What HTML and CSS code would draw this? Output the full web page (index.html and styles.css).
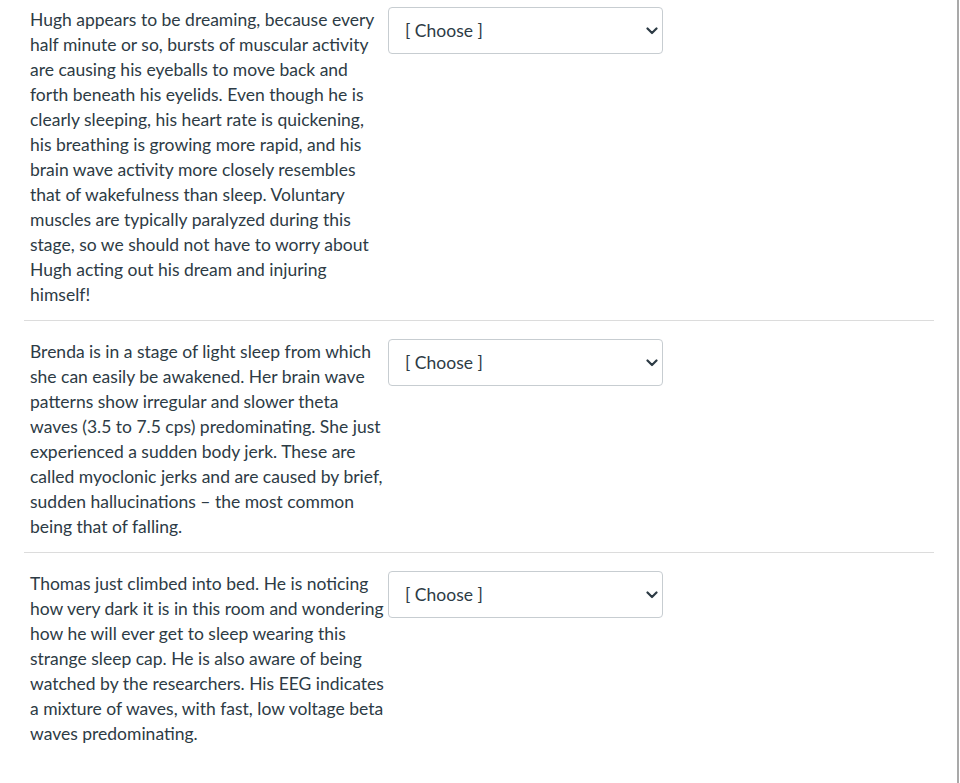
FILE: index.html
```html
<!DOCTYPE html>
<html>
<head>
<meta charset="utf-8">
<link rel="stylesheet" href="styles.css">
</head>
<body>
<div class="page">
  <div class="answers">
    <div class="row first">
      <div class="match-left">Hugh appears to be dreaming, because every half minute or so, bursts of muscular activity are causing his eyeballs to move back and forth beneath his eyelids. Even though he is clearly sleeping, his heart rate is quickening, his breathing is growing more rapid, and his brain wave activity more closely resembles that of wakefulness than sleep. Voluntary muscles are typically paralyzed during this stage, so we should not have to worry about Hugh acting out his dream and injuring himself!</div>
      <div class="select-wrap">
        <select class="choose"><option>[ Choose ]</option></select>
        <svg class="chev" width="12" height="8" viewBox="0 0 12 8"><path d="M1.5 1.5 L6 6 L10.5 1.5" fill="none" stroke="#2d3b45" stroke-width="2.2" stroke-linecap="round" stroke-linejoin="round"/></svg>
      </div>
    </div>
    <div class="row">
      <div class="match-left">Brenda is in a stage of light sleep from which she can easily be awakened. Her brain wave patterns show irregular and slower theta waves (3.5 to 7.5 cps) predominating. She just experienced a sudden body jerk. These are called myoclonic jerks and are caused by brief, sudden hallucinations – the most common being that of falling.</div>
      <div class="select-wrap">
        <select class="choose"><option>[ Choose ]</option></select>
        <svg class="chev" width="12" height="8" viewBox="0 0 12 8"><path d="M1.5 1.5 L6 6 L10.5 1.5" fill="none" stroke="#2d3b45" stroke-width="2.2" stroke-linecap="round" stroke-linejoin="round"/></svg>
      </div>
    </div>
    <div class="row last">
      <div class="match-left">Thomas just climbed into bed. He is noticing how very dark it is in this room and wondering how he will ever get to sleep wearing this strange sleep cap. He is also aware of being watched by the researchers. His EEG indicates a mixture of waves, with fast, low voltage beta waves predominating.</div>
      <div class="select-wrap">
        <select class="choose"><option>[ Choose ]</option></select>
        <svg class="chev" width="12" height="8" viewBox="0 0 12 8"><path d="M1.5 1.5 L6 6 L10.5 1.5" fill="none" stroke="#2d3b45" stroke-width="2.2" stroke-linecap="round" stroke-linejoin="round"/></svg>
      </div>
    </div>
  </div>
</div>
</body>
</html>
```
FILE: styles.css
```css
html, body {
  margin: 0;
  padding: 0;
  background: #fff;
}
body {
  font-family: Lato, "Noto Sans", sans-serif;
  font-size: 17.5px;
  line-height: 25px;
  color: #2d3b45;
}
.page {
  width: 957px;
  min-height: 783px;
  border-right: 2px solid #a9a9a9;
  box-sizing: content-box;
}
.answers {
  margin-left: 24px;
  width: 910px;
}
.row {
  display: flex;
  align-items: flex-start;
  padding: 18px 0 13px;
  border-bottom: 1px solid #dcdcdc;
}
.row.first {
  padding-top: 7px;
}
.row.last {
  border-bottom: none;
}
.match-left {
  width: 356px;
  padding-left: 6px;
  flex: none;
}
.select-wrap {
  position: relative;
  margin-left: 2px;
  width: 275px;
  height: 47px;
  flex: none;
}
.choose {
  appearance: none;
  -webkit-appearance: none;
  width: 275px;
  height: 47px;
  margin: 0;
  padding: 0 30px 0 16px;
  border: 1px solid #c7cdd1;
  border-radius: 4px;
  background: #fff;
  font-family: Lato, "Noto Sans", sans-serif;
  font-size: 17.5px;
  color: #2d3b45;
  box-sizing: border-box;
}
.chev {
  position: absolute;
  right: 5px;
  top: 20px;
  pointer-events: none;
}
```
